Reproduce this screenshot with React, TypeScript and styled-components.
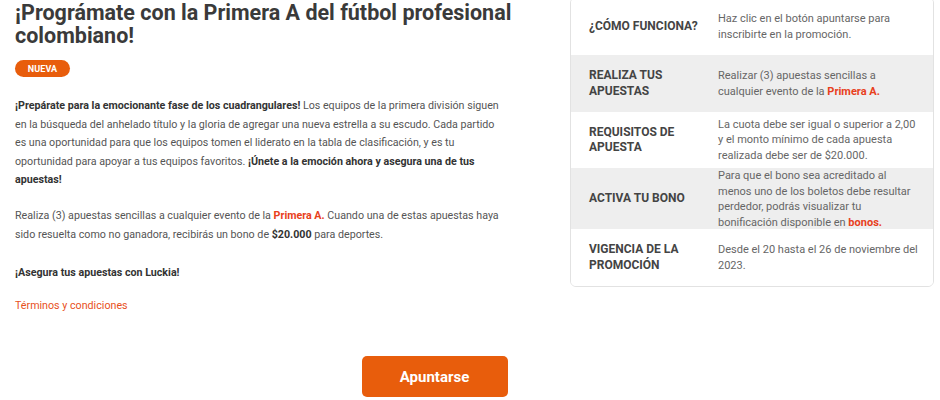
import React from "react";
import styled, { createGlobalStyle } from "styled-components";

const Global = createGlobalStyle`
  html, body { margin: 0; padding: 0; background: #fff; }
  body { font-family: Roboto, "Liberation Sans", Arial, sans-serif; overflow: hidden; }
  * { box-sizing: border-box; }
`;

const Page = styled.div`
  width: 940px;
  height: 400px;
  overflow: hidden;
  padding: 0 6px 0 15px;
`;

const Main = styled.div`
  display: flex;
  align-items: flex-start;
  gap: 63px;
`;

const Left = styled.div`
  width: 492px;
  flex: none;
`;

const Title = styled.h1`
  margin: 1px -30px 0 0;
  font-size: 21.5px;
  line-height: 23px;
  font-weight: 700;
  color: #3a3a3a;
`;

const Badge = styled.span`
  display: inline-flex;
  align-items: center;
  justify-content: center;
  margin-top: 13px;
  width: 55px;
  height: 17px;
  border-radius: 9px;
  background: #e85d0c;
  color: #fff;
  font-size: 9px;
  font-weight: 700;
  letter-spacing: 0.1px;
`;

const Text = styled.p<{ $mt?: number }>`
  margin: ${(p) => p.$mt ?? 0}px 0 0;
  font-size: 10.7px;
  line-height: 18.6px;
  color: #555;
`;

const Strong = styled.strong`
  font-weight: 700;
  color: #333;
`;

const Accent = styled.strong`
  font-weight: 700;
  color: #e8401c;
`;

const Link = styled.a`
  color: #e8501c;
  text-decoration: none;
  font-size: 10.7px;
`;

const Panel = styled.div`
  flex: none;
  width: 364px;
  margin-top: -3px;
  border: 1px solid #e2e2e2;
  border-radius: 6px;
  overflow: hidden;
  background: #fff;
`;

const Row = styled.div<{ $alt?: boolean; $h: number }>`
  display: grid;
  grid-template-columns: 147px 1fr;
  align-items: center;
  height: ${(p) => p.$h}px;
  background: ${(p) => (p.$alt ? "#eeeeee" : "#fff")};
`;

const Label = styled.div`
  padding: 0 15px 0 18px;
  font-size: 12px;
  line-height: 15.5px;
  font-weight: 700;
  color: #444;
  text-transform: uppercase;
`;

const Value = styled.div`
  padding-right: 14px;
  font-size: 11px;
  line-height: 15.5px;
  color: #666;
`;

const Footer = styled.div`
  display: flex;
  justify-content: center;
  padding-right: 80px;
  margin-top: 41px;
`;

const Button = styled.button`
  width: 146px;
  height: 41px;
  border: none;
  border-radius: 5px;
  background: #e85d0c;
  color: #fff;
  font-family: Roboto, "Liberation Sans", Arial, sans-serif;
  font-size: 15px;
  font-weight: 700;
  cursor: pointer;
`;

const rows: { label: string; value: React.ReactNode; h: number }[] = [
  { label: "¿Cómo funciona?", value: "Haz clic en el botón apuntarse para inscribirte en la promoción.", h: 57 },
  {
    label: "Realiza tus apuestas",
    value: (
      <>
        Realizar (3) apuestas sencillas a cualquier evento de la <Accent>Primera A.</Accent>
      </>
    ),
    h: 57,
  },
  {
    label: "Requisitos de apuesta",
    value: "La cuota debe ser igual o superior a 2,00 y el monto mínimo de cada apuesta realizada debe ser de $20.000.",
    h: 56,
  },
  {
    label: "Activa tu bono",
    value: (
      <>
        Para que el bono sea acreditado al menos uno de los boletos debe resultar perdedor, podrás visualizar tu
        bonificación disponible en <Accent>bonos.</Accent>
      </>
    ),
    h: 61,
  },
  { label: "Vigencia de la promoción", value: "Desde el 20 hasta el 26 de noviembre del 2023.", h: 57 },
];

export default function App() {
  return (
    <Page>
      <Global />
      <Main>
        <Left>
          <Title>¡Prográmate con la Primera A del fútbol profesional colombiano!</Title>
          <Badge>NUEVA</Badge>
          <Text $mt={20}>
            <Strong>¡Prepárate para la emocionante fase de los cuadrangulares!</Strong> Los equipos de la primera
            división siguen en la búsqueda del anhelado título y la gloria de agregar una nueva estrella a su escudo.
            Cada partido es una oportunidad para que los equipos tomen el liderato en la tabla de clasificación, y es tu
            oportunidad para apoyar a tus equipos favoritos.{" "}
            <Strong>¡Únete a la emoción ahora y asegura una de tus apuestas!</Strong>
          </Text>
          <Text $mt={17}>
            Realiza (3) apuestas sencillas a cualquier evento de la <Accent>Primera A.</Accent> Cuando una de estas
            apuestas haya sido resuelta como no ganadora, recibirás un bono de <Strong>$20.000</Strong> para deportes.
          </Text>
          <Text $mt={20}>
            <Strong>¡Asegura tus apuestas con Luckia!</Strong>
          </Text>
          <Text $mt={14}>
            <Link href="#">Términos y condiciones</Link>
          </Text>
        </Left>
        <Panel>
          {rows.map((r, i) => (
            <Row key={r.label} $alt={i % 2 === 1} $h={r.h}>
              <Label>{r.label}</Label>
              <Value>{r.value}</Value>
            </Row>
          ))}
        </Panel>
      </Main>
      <Footer>
        <Button>Apuntarse</Button>
      </Footer>
    </Page>
  );
}
